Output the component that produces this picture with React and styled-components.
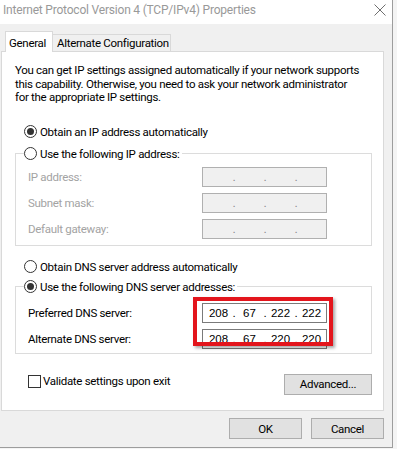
import styled, { createGlobalStyle } from "styled-components";

const GlobalStyle = createGlobalStyle`
body {
  margin: 0;
  background: #f4f4f4;
  font-family: Roboto, "Noto Sans", sans-serif;
  font-size: 11.5px;
  letter-spacing: -0.3px;
  color: #000;
}
`
const Window = styled.div`
width: 392px;
height: 447px;
border-right: 1px solid #9d9d9d;
border-bottom: 1px solid #9d9d9d;
display: flex;
flex-direction: column;
background: #f0f0f0;
`
const TitleBar = styled.div`
height: 24px;
background: #fff;
display: flex;
align-items: center;
justify-content: space-between;
padding: 0 6px 4px 3px;
color: #999;
font-size: 12px;
letter-spacing: -0.2px;
flex-shrink: 0;
box-sizing: border-box;
`
const Body = styled.div`
flex: 1;
padding: 8px 8px 0 1px;
display: flex;
flex-direction: column;
`
const Tabs = styled.div`
display: flex;
align-items: flex-end;
padding-left: 4px;
height: 20px;
margin-bottom: -1px;
position: relative;
z-index: 1;
`
const Tab = styled.div`
box-sizing: border-box;
width: ${props => props.width}px;
height: ${props => props.active ? "21px" : "18px"};
padding: ${props => props.active ? "1px 0 0 3px" : "0 0 0 4px"};
background: ${props => props.active ? "#fff" : "#f0f0f0"};
border: 1px solid #d9d9d9;
border-bottom: ${props => props.active ? "none" : "1px solid #d9d9d9"};
border-left: ${props => props.active ? "1px solid #d9d9d9" : "none"};
display: flex;
align-items: center;
white-space: nowrap;
`
const Panel = styled.div`
box-sizing: border-box;
height: 360px;
background: #fff;
border: 1px solid #d9d9d9;
padding: 12px 11px 0 13px;
display: flex;
flex-direction: column;
`
const Desc = styled.p`
margin: 0;
line-height: 13.5px;
white-space: nowrap;
`
const RadioRow = styled.label`
display: flex;
align-items: center;
gap: 3px;
height: 16px;
padding-left: ${props => props.inset ?? 9}px;
margin-top: ${props => props.top || 0}px;
white-space: nowrap;
`
const Radio = styled.span`
box-sizing: border-box;
width: 13px;
height: 13px;
border-radius: 50%;
border: 1px solid #333;
background: #fff;
display: flex;
align-items: center;
justify-content: center;
&::after {
  content: "";
  width: 7px;
  height: 7px;
  border-radius: 50%;
  background: ${props => props.checked ? "#333" : "transparent"};
}
`
const Group = styled.fieldset`
margin: ${props => props.top || 0}px 0 0 0;
padding: ${props => props.padTop}px 0 ${props => props.padBottom}px 0;
border: 1px solid #dcdcdc;
min-width: 0;
`
const Legend = styled.legend`
margin-left: 8px;
padding: 0 2px 0 0;
`
const Rows = styled.div`
position: relative;
display: flex;
flex-direction: column;
gap: 6px;
`
const Row = styled.div`
display: flex;
align-items: center;
height: 20px;
padding-left: 12px;
`
const Label = styled.span`
width: 174px;
color: ${props => props.disabled ? "#a3a3a3" : "#000"};
`
const IpField = styled.div`
box-sizing: border-box;
width: 125px;
height: 20px;
border: 1px solid ${props => props.disabled ? "#b0b0b0" : "#7a7a7a"};
background: ${props => props.disabled ? "#f0f0f0" : "#fff"};
display: flex;
align-items: center;
padding-left: 2px;
font-family: "Liberation Sans", Arial, sans-serif;
font-size: 11.5px;
letter-spacing: 0;
color: ${props => props.disabled ? "#8a8a8a" : "#000"};
`
const Octet = styled.span`
width: 27px;
text-align: center;
`
const Dot = styled.span`
width: 4px;
text-align: center;
`
const Highlight = styled.div`
position: absolute;
top: -6px;
left: 177px;
width: 140px;
height: 49px;
box-sizing: border-box;
border: 4px solid #e3151c;
box-shadow: 2px 2px 3px rgba(0, 0, 0, 0.35);
pointer-events: none;
`
const Bottom = styled.div`
margin-top: 20px;
display: flex;
justify-content: space-between;
align-items: flex-start;
`
const CheckRow = styled.label`
display: flex;
align-items: center;
gap: 2px;
padding-left: 13px;
margin-top: 0px;
height: 15px;
`
const Checkbox = styled.span`
box-sizing: border-box;
width: 13px;
height: 13px;
border: 1px solid #333;
background: #fff;
`
const Button = styled.button`
box-sizing: border-box;
width: ${props => props.width || 73}px;
height: ${props => props.height || 21}px;
background: #e1e1e1;
border: 1px solid #adadad;
font-family: inherit;
font-size: 11.5px;
letter-spacing: -0.3px;
color: #000;
padding: 0;
`
const Footer = styled.div`
display: flex;
justify-content: flex-end;
gap: 9px;
margin-top: 7px;
`

const IpAddress = ({ value, disabled }) => {
    const parts = value ? value.split(".") : ["", "", "", ""];
    return (
        <IpField disabled={disabled}>
            {parts.map((p, i) => (
                <span key={i} style={{ display: "contents" }}>
                    <Octet>{p}</Octet>
                    {i < 3 && <Dot>.</Dot>}
                </span>
            ))}
        </IpField>
    );
};

const App = () => {
    return (
        <>
            <GlobalStyle />
            <Window>
                <TitleBar>
                    <span>Internet Protocol Version 4 (TCP/IPv4) Properties</span>
                    <svg width="12" height="12" viewBox="0 0 12 12">
                        <path d="M0.5 0.5 L11.5 11.5 M11.5 0.5 L0.5 11.5" stroke="#6f6f6f" strokeWidth="1" fill="none" />
                    </svg>
                </TitleBar>
                <Body>
                    <Tabs>
                        <Tab active width={48}>General</Tab>
                        <Tab width={118}>Alternate Configuration</Tab>
                    </Tabs>
                    <Panel>
                        <Desc>
                            You can get IP settings assigned automatically if your network supports<br />
                            this capability. Otherwise, you need to ask your network administrator<br />
                            for the appropriate IP settings.
                        </Desc>

                        <RadioRow top={19}><Radio checked />Obtain an IP address automatically</RadioRow>
                        <Group top={6} padTop={5} padBottom={6}>
                            <Legend><RadioRow inset={0}><Radio />Use the following IP address:</RadioRow></Legend>
                            <Rows>
                                <Row><Label disabled>IP address:</Label><IpAddress disabled /></Row>
                                <Row><Label disabled>Subnet mask:</Label><IpAddress disabled /></Row>
                                <Row><Label disabled>Default gateway:</Label><IpAddress disabled /></Row>
                            </Rows>
                        </Group>

                        <RadioRow top={13}><Radio />Obtain DNS server address automatically</RadioRow>
                        <Group top={4} padTop={8} padBottom={4}>
                            <Legend><RadioRow inset={0}><Radio checked />Use the following DNS server addresses:</RadioRow></Legend>
                            <Rows>
                                <Row><Label>Preferred DNS server:</Label><IpAddress value="208.67.222.222" /></Row>
                                <Row><Label>Alternate DNS server:</Label><IpAddress value="208.67.220.220" /></Row>
                                <Highlight />
                            </Rows>
                        </Group>

                        <Bottom>
                            <CheckRow><Checkbox />Validate settings upon exit</CheckRow>
                            <Button width={88}>Advanced...</Button>
                        </Bottom>
                    </Panel>
                    <Footer>
                        <Button>OK</Button>
                        <Button>Cancel</Button>
                    </Footer>
                </Body>
            </Window>
        </>
    );
};

export default App;
